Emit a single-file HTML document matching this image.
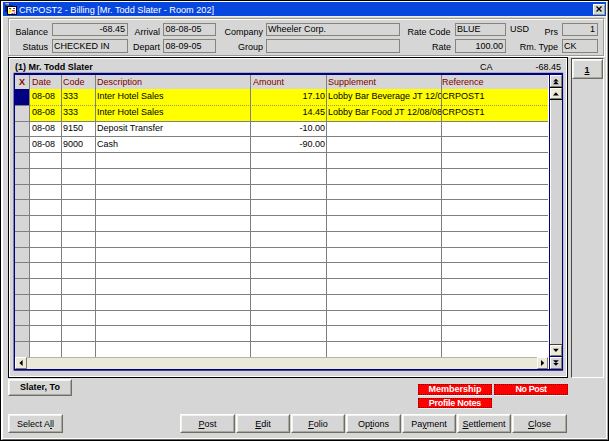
<!DOCTYPE html>
<html><head><meta charset="utf-8"><title>CRPOST2 - Billing</title>
<style>
html,body{margin:0;padding:0;}
body{width:609px;height:441px;overflow:hidden;background:#d6d6d6;position:relative;
 font-family:"Liberation Sans",sans-serif;font-size:9px;color:#000;}
div{position:absolute;box-sizing:border-box;}
.t{white-space:nowrap;line-height:10px;height:10px;}
.b{font-weight:bold;}
.r{text-align:right;}
.c{text-align:center;}
.fld{border:1px solid #85857b;background:#d6d6d6;}
.btn{background:#d6d6d6;border-top:1px solid #fff;border-left:1px solid #fff;border-right:1px solid #6e6e62;border-bottom:1px solid #6e6e62;}
.btn:after{content:"";position:absolute;left:0;top:0;right:0;bottom:0;border-top:1px solid #f4f4ee;border-left:1px solid #f4f4ee;border-right:1px solid #a8a89c;border-bottom:1px solid #a8a89c;}
.hd{color:#800000;}
.red{background:#ff0000;border:1px dotted #900000;color:#fff;font-weight:bold;text-align:center;line-height:9px;}
.red span{position:relative;top:-0.5px;}
.red span{display:inline-block;white-space:nowrap;}
u{text-decoration:underline;}
svg{position:absolute;left:0;top:0;}
</style></head><body>

<div style="left:0px;top:0px;width:609px;height:441px;border:1px solid #000;"></div>
<div style="left:1px;top:1px;width:607px;height:439px;border-left:2px solid #fff;border-top:1px solid #fff;border-right:1px solid #a8a69c;border-bottom:1px solid #66665e;"></div>
<div style="left:606px;top:1px;width:1px;height:438px;background:#fff;"></div>
<div style="left:1px;top:438px;width:606px;height:1px;background:#fff;"></div>
<div style="left:3px;top:2px;width:603px;height:14px;background:#0846e0;"></div>
<div style="left:3px;top:16px;width:603px;height:1px;background:#f4f0e0;"></div>
<div class="t" style="left:19px;top:3.5px;color:#fff;font-size:9.5px;line-height:11px;height:11px;transform:scaleX(0.963);transform-origin:0 0;-webkit-text-stroke:0;">CRPOST2 - Billing [Mr. Todd Slater - Room 202]</div>
<svg width="20" height="18" viewBox="0 0 20 18">
<rect x="5.5" y="3" width="3.5" height="1.6" fill="#d0a8e4"/><rect x="6.4" y="4" width="1.7" height="4" fill="#2e9a5e"/>
<rect x="5" y="5.5" width="2" height="6.5" fill="#141470"/><path d="M9 4.2 L13 6.2" stroke="#102080" stroke-width="1"/>
<rect x="7" y="6" width="10" height="9" fill="#000"/>
<rect x="8" y="7" width="8" height="7" fill="#fff"/>
<path d="M11.4 8.4 L8.4 11.6 L9.8 11.6 L8.4 14 L11.6 10.8 L10.2 10.8 Z" fill="#f4ec00" stroke="#f4ec00" stroke-width="0.8"/>
<rect x="9.2" y="8" width="1.6" height="1.2" fill="#181870"/>
<rect x="13" y="8" width="2" height="1" fill="#1838e0"/><rect x="12.2" y="10" width="2.6" height="1.4" fill="#f01818"/>
<rect x="11.5" y="13" width="2" height="0.9" fill="#f01818"/><rect x="14" y="12.4" width="1.2" height="1.2" fill="#1838e0"/>
</svg>
<div style="left:593px;top:4px;width:12px;height:11px;background:#d8d8d2;border-top:1px solid #fff;border-left:1px solid #fff;border-right:1px solid #a89c68;border-bottom:1px solid #a89c68;"></div>
<svg width="609" height="20" viewBox="0 0 609 20"><path d="M596.5 6.5 L601.5 11.5 M601.5 6.5 L596.5 11.5" stroke="#000" stroke-width="1.25" fill="none"/></svg>
<div style="left:9px;top:19px;width:596px;height:38px;border:1px solid #fff;"></div>
<div style="left:8px;top:18px;width:596px;height:38px;border:1px solid #9a9a9a;"></div>
<div class="fld" style="left:52px;top:23px;width:76px;height:13px;"></div>
<div class="t r" style="left:52px;top:24px;width:73px;">-68.45</div>
<div class="fld" style="left:52px;top:39px;width:76px;height:14px;"></div>
<div class="t" style="left:54px;top:41px;">CHECKED IN</div>
<div class="fld" style="left:163px;top:23px;width:53px;height:13px;"></div>
<div class="t" style="left:165.5px;top:24px;">08-08-05</div>
<div class="fld" style="left:163px;top:39px;width:53px;height:14px;"></div>
<div class="t" style="left:165.5px;top:41px;">08-09-05</div>
<div class="fld" style="left:266px;top:23px;width:134px;height:13px;"></div>
<div class="t" style="left:268px;top:24px;">Wheeler Corp.</div>
<div class="fld" style="left:266px;top:39px;width:134px;height:14px;"></div>
<div class="fld" style="left:455px;top:23px;width:51px;height:13px;"></div>
<div class="t" style="left:457px;top:24px;">BLUE</div>
<div class="fld" style="left:455px;top:39px;width:51px;height:14px;"></div>
<div class="t r" style="left:455px;top:41px;width:48px;">100.00</div>
<div class="fld" style="left:562px;top:23px;width:36px;height:13px;"></div>
<div class="t r" style="left:562px;top:24px;width:33px;">1</div>
<div class="fld" style="left:562px;top:39px;width:36px;height:14px;"></div>
<div class="t" style="left:564px;top:41px;">CK</div>
<div class="t r" style="left:-32px;top:27px;width:80px;">Balance</div>
<div class="t r" style="left:-32px;top:42px;width:80px;">Status</div>
<div class="t r" style="left:80px;top:27px;width:80px;">Arrival</div>
<div class="t r" style="left:80px;top:42px;width:80px;">Depart</div>
<div class="t r" style="left:183px;top:27px;width:80px;">Company</div>
<div class="t r" style="left:183px;top:42px;width:80px;">Group</div>
<div class="t r" style="left:370.5px;top:27px;width:80px;">Rate Code</div>
<div class="t r" style="left:371px;top:42px;width:80px;">Rate</div>
<div class="t" style="left:510px;top:24px;">USD</div>
<div class="t r" style="left:478px;top:27px;width:80px;">Prs</div>
<div class="t r" style="left:478px;top:42px;width:80px;">Rm. Type</div>
<div style="left:8px;top:57px;width:560px;height:321px;border:1px solid #000;"></div>
<div style="left:9px;top:58px;width:558px;height:319px;border:1px solid #fff;"></div>
<div class="t b" style="left:15px;top:62px;">(1) Mr. Todd Slater</div>
<div class="t" style="left:480px;top:62px;">CA</div>
<div class="t r" style="left:500px;top:62px;width:61px;">-68.45</div>
<svg width="609" height="441" viewBox="0 0 609 441"><rect x="13.6" y="72.8" width="549.5" height="297.9" fill="#000080"/></svg>
<div style="left:15px;top:75px;width:533px;height:282px;background:#fff;"></div>
<div style="left:548px;top:75px;width:1px;height:294px;background:#fff;"></div>
<div style="left:15px;top:75px;width:533px;height:14px;background:#d6d6d6;"></div>
<div style="left:15px;top:89px;width:14px;height:268px;background:#d6d6d6;"></div>
<div style="left:30px;top:89px;width:518px;height:32px;background:#ffff00;"></div>
<div style="left:15px;top:89px;width:14px;height:16px;background:#000080;"></div>
<svg width="609" height="441" viewBox="0 0 609 441"><rect x="15" y="105" width="15" height="1" fill="#808080"/><line x1="30" y1="105.5" x2="548" y2="105.5" stroke="#9c9c38" stroke-width="1" stroke-dasharray="1 1"/><rect x="15" y="121" width="533" height="1" fill="#808080"/><rect x="15" y="136" width="533" height="1" fill="#808080"/><rect x="15" y="152" width="533" height="1" fill="#808080"/><rect x="15" y="168" width="533" height="1" fill="#808080"/><rect x="15" y="184" width="533" height="1" fill="#808080"/><rect x="15" y="199" width="533" height="1" fill="#808080"/><rect x="15" y="215" width="533" height="1" fill="#808080"/><rect x="15" y="231" width="533" height="1" fill="#808080"/><rect x="15" y="247" width="533" height="1" fill="#808080"/><rect x="15" y="262" width="533" height="1" fill="#808080"/><rect x="15" y="278" width="533" height="1" fill="#808080"/><rect x="15" y="294" width="533" height="1" fill="#808080"/><rect x="15" y="310" width="533" height="1" fill="#808080"/><rect x="15" y="325" width="533" height="1" fill="#808080"/><rect x="15" y="341" width="533" height="1" fill="#808080"/><rect x="15" y="357" width="533" height="1" fill="#808080"/><rect x="29" y="75" width="1" height="282" fill="#808080"/><rect x="61" y="75" width="1" height="282" fill="#808080"/><rect x="95" y="75" width="1" height="282" fill="#808080"/><rect x="250" y="75" width="1" height="282" fill="#808080"/><rect x="326" y="75" width="1" height="282" fill="#808080"/><rect x="441" y="75" width="1" height="282" fill="#808080"/></svg>
<div class="t b hd" style="left:19px;top:77px;">X</div>
<div class="t hd" style="left:32px;top:77px;">Date</div>
<div class="t hd" style="left:63px;top:77px;">Code</div>
<div class="t hd" style="left:97px;top:77px;">Description</div>
<div class="t hd" style="left:253px;top:77px;">Amount</div>
<div class="t hd" style="left:328px;top:77px;">Supplement</div>
<div class="t hd" style="left:442px;top:77px;">Reference</div>
<div class="t" style="left:32px;top:91px;">08-08</div>
<div class="t" style="left:63px;top:91px;">333</div>
<div class="t" style="left:97px;top:91px;">Inter Hotel Sales</div>
<div class="t r" style="left:252px;top:91px;width:73px;">17.10</div>
<div class="t" style="left:328px;top:91px;width:113px;overflow:hidden;">Lobby Bar Beverage JT 12/08/08</div>
<div class="t" style="left:442px;top:91px;">CRPOST1</div>
<div class="t" style="left:32px;top:107px;">08-08</div>
<div class="t" style="left:63px;top:107px;">333</div>
<div class="t" style="left:97px;top:107px;">Inter Hotel Sales</div>
<div class="t r" style="left:252px;top:107px;width:73px;">14.45</div>
<div class="t" style="left:328px;top:107px;width:113px;overflow:hidden;">Lobby Bar Food JT 12/08/08 1</div>
<div class="t" style="left:442px;top:107px;">CRPOST1</div>
<div class="t" style="left:32px;top:123px;">08-08</div>
<div class="t" style="left:63px;top:123px;">9150</div>
<div class="t" style="left:97px;top:123px;">Deposit Transfer</div>
<div class="t r" style="left:252px;top:123px;width:73px;">-10.00</div>
<div class="t" style="left:32px;top:139px;">08-08</div>
<div class="t" style="left:63px;top:139px;">9000</div>
<div class="t" style="left:97px;top:139px;">Cash</div>
<div class="t r" style="left:252px;top:139px;width:73px;">-90.00</div>
<div style="left:550px;top:75px;width:12px;height:294px;background:#d3d3d3;"></div>
<div style="left:550px;top:100px;width:1px;height:244px;background:#fff;"></div>
<div style="left:550px;top:75px;width:12px;height:12px;background:#d6d6d6;border-top:1px solid #fff;border-left:1px solid #fff;border-right:1px solid #7c7c70;border-bottom:1px solid #7c7c70;"></div>
<div style="left:550px;top:87px;width:12px;height:1px;background:#000;"></div>
<div style="left:550px;top:88px;width:12px;height:11px;background:#ece9d8;border-top:1px solid #fff;border-left:1px solid #fff;border-right:1px solid #7c7c70;border-bottom:1px solid #7c7c70;"></div>
<div style="left:550px;top:99px;width:12px;height:1px;background:#000;"></div>
<div style="left:550px;top:344px;width:12px;height:1px;background:#404040;"></div>
<div style="left:550px;top:345px;width:12px;height:11px;background:#ece9d8;border-top:1px solid #fff;border-left:1px solid #fff;border-right:1px solid #7c7c70;border-bottom:1px solid #7c7c70;"></div>
<div style="left:550px;top:356px;width:12px;height:1px;background:#000080;"></div>
<div style="left:550px;top:357px;width:12px;height:12px;background:#d6d6d6;border-top:1px solid #fff;border-left:1px solid #fff;border-right:1px solid #7c7c70;border-bottom:1px solid #7c7c70;"></div>
<div style="left:15px;top:357px;width:533px;height:12px;background:#ece9d8;border-top:1px solid #b4b4a8;"></div>
<div style="left:15px;top:357px;width:12px;height:12px;background:#ece9d8;border-top:1px solid #fff;border-left:1px solid #fff;border-right:1px solid #7c7c70;border-bottom:1px solid #7c7c70;"></div>
<div style="left:537px;top:357px;width:11px;height:12px;background:#ece9d8;border-top:1px solid #fff;border-left:1px solid #fff;border-right:1px solid #7c7c70;border-bottom:1px solid #7c7c70;"></div>
<svg width="609" height="441" viewBox="0 0 609 441" fill="#000">
<path d="M555.9 78.7 L558.6 81.4 L553.2 81.4 Z"/><path d="M555.9 81.3 L558.8 84.3 L553 84.3 Z"/>
<path d="M555.9 92.2 L558.8 95.6 L553 95.6 Z"/>
<path d="M553 348.7 L558.8 348.7 L555.9 351.9 Z"/>
<path d="M553 360.3 L558.8 360.3 L555.9 363.1 Z"/><path d="M553.2 362.9 L558.6 362.9 L555.9 365.7 Z"/>
<path d="M22.6 360 L22.6 366 L19.4 363 Z"/>
<path d="M541 360 L541 366 L544.2 363 Z"/>
</svg>
<div style="left:571px;top:58px;width:33px;height:320px;border-left:1px solid #4a4a40;border-top:1px solid #4a4a40;border-right:1px solid #fff;border-bottom:1px solid #fff;"></div>
<div class="btn" style="left:572px;top:59px;width:31px;height:20px;"></div>
<div class="t b c" style="left:572px;top:65px;width:30px;"><u>1</u></div>
<div class="btn" style="left:8px;top:379px;width:64px;height:17px;"></div>
<div class="t b c" style="left:8px;top:382px;width:64px;">Slater, To</div>
<div class="red" style="left:418px;top:384px;width:74px;height:11px;"><span style="">Membership</span></div>
<div class="red" style="left:494px;top:384px;width:74px;height:11px;"><span style="letter-spacing:-0.4px;">No Post</span></div>
<div class="red" style="left:418px;top:398px;width:74px;height:10px;"><span style="letter-spacing:-0.25px;">Profile Notes</span></div>
<div style="left:418px;top:395px;width:74px;height:1px;background:#f4f8f4;"></div>
<div style="left:494px;top:395px;width:74px;height:1px;background:#f4f8f4;"></div>
<div style="left:418px;top:408px;width:74px;height:1px;background:#f0f4f0;"></div>
<div class="btn" style="left:8px;top:414px;width:55px;height:19px;"></div>
<div class="t c" style="left:8px;top:419px;width:55px;">Select A<u>l</u>l</div>
<div class="btn" style="left:180px;top:414px;width:55px;height:19px;"></div>
<div class="t c" style="left:180px;top:419px;width:55px;"><u>P</u>ost</div>
<div class="btn" style="left:236px;top:414px;width:54px;height:19px;"></div>
<div class="t c" style="left:236px;top:419px;width:54px;"><u>E</u>dit</div>
<div class="btn" style="left:291px;top:414px;width:54px;height:19px;"></div>
<div class="t c" style="left:291px;top:419px;width:54px;"><u>F</u>olio</div>
<div class="btn" style="left:346px;top:414px;width:55px;height:19px;"></div>
<div class="t c" style="left:346px;top:419px;width:55px;">Op<u>t</u>ions</div>
<div class="btn" style="left:402px;top:414px;width:54px;height:19px;"></div>
<div class="t c" style="left:402px;top:419px;width:54px;">Pa<u>y</u>ment</div>
<div class="btn" style="left:457px;top:414px;width:54px;height:19px;"></div>
<div class="t c" style="left:457px;top:419px;width:54px;"><u>S</u>ettlement</div>
<div class="btn" style="left:512px;top:414px;width:55px;height:19px;"></div>
<div class="t c" style="left:512px;top:419px;width:55px;"><u>C</u>lose</div>
</body></html>
